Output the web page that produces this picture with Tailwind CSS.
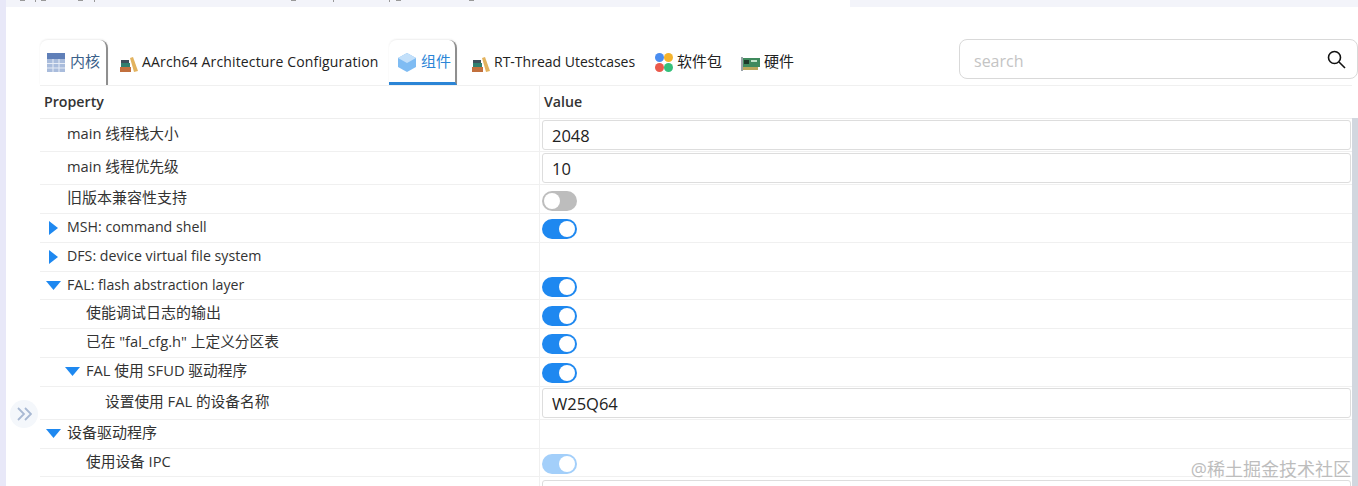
<!DOCTYPE html>
<html lang="en">
<head>
  <meta charset="UTF-8" />
  <title>RT-Thread Settings</title>
  <script src="https://cdn.jsdelivr.net/npm/@tailwindcss/browser@4"></script>
</head>
<body class="bg-white">
  <div class="relative flex h-[486px] w-[1358px] overflow-hidden bg-white font-['Open_Sans','Noto_Sans_CJK_SC',sans-serif] text-[14.2px] text-[#333]">
    <!-- left edge -->
    <div class="h-full w-[6px] shrink-0 bg-[#e8e8f8]"></div>

    <div class="flex min-w-0 flex-1 flex-col">
      <!-- clipped editor tabs -->
      <div class="flex h-[7px] shrink-0 bg-[#f3f4fa]">
        <div class="flex h-[2px] w-[654px] items-start pl-[14px]">
          <span class="h-px w-[5px] bg-[#999]"></span>
          <span class="ml-[10px] h-[2px] w-px bg-[#999]"></span>
          <span class="ml-[5px] h-px w-[5px] bg-[#999]"></span>
          <span class="ml-[32px] h-px w-[5px] bg-[#999]"></span>
          <span class="ml-[11px] h-[2px] w-px bg-[#999]"></span>
          <span class="ml-[196px] h-px w-[5px] bg-[#999]"></span>
          <span class="ml-[37px] h-[2px] w-px bg-[#999]"></span>
          <span class="ml-[55px] h-[2px] w-px bg-[#999]"></span>
          <span class="ml-[6px] h-px w-[5px] bg-[#999]"></span>
          <span class="ml-[68px] h-px w-[5px] bg-[#999]"></span>
        </div>
        <div class="h-full w-[190px] bg-white"></div>
        <div class="flex-1"></div>
      </div>

      <!-- tab bar -->
      <div class="flex h-[78px] shrink-0 items-end pl-[34px]">
        <div class="flex h-[45px] items-center">
          <div class="flex h-full w-[68px] items-center gap-[5px] rounded-t-[8px] border-r-2 border-[#8f8f8f] pl-[7px] shadow-[0_-1px_2px_#eeeeee]">
            <svg width="18" height="19" viewBox="0 0 18 19">
              <rect width="18" height="19" fill="#a9bcdc" />
              <rect width="18" height="6" fill="#5f7fb8" />
              <path d="M6 6v13M12 6v13M0 10.5h18M0 15h18" stroke="#e6ecf6" stroke-width="1" />
            </svg>
            <span class="-mt-[2px] text-[15px] whitespace-nowrap text-[#3a5f8a]">内核</span>
          </div>
          <div class="flex h-full w-[281px] items-center pl-[12px]">
            <svg width="18" height="15" viewBox="0 0 18 15" class="mt-[4px] shrink-0">
              <rect x="0" y="10" width="11" height="5" fill="#c2703d" />
              <rect x="1" y="6" width="9" height="4" fill="#2f7f6f" />
              <rect x="1" y="3" width="8" height="3" fill="#3c4f5c" />
              <path d="M10 1 L13 0 L18 14 L14 15 Z" fill="#e3b35f" />
            </svg>
            <span class="-mt-[2px] ml-[4px] whitespace-nowrap text-[14px] tracking-[0.15px] text-[#222]">AArch64 Architecture Configuration</span>
          </div>
          <div class="flex h-full w-[68px] items-center gap-[4px] rounded-t-[8px] border-r-2 border-b-[3px] border-r-[#8f8f8f] border-b-[#2b85d6] pl-[8px] pt-[2px] shadow-[0_-1px_2px_#eeeeee]">
            <svg width="20" height="20" viewBox="0 0 20 20">
              <path d="M10 1 L19 6 V15 L10 20 L1 15 V6 Z" fill="#7fbcf3" />
              <path d="M10 1 L19 6 L10 11 L1 6 Z" fill="#c3e0fa" />
            </svg>
            <span class="-mt-[2px] text-[15px] whitespace-nowrap text-[#2b85d6]">组件</span>
          </div>
          <div class="flex h-full w-[198px] items-center pl-[15px]">
            <svg width="18" height="15" viewBox="0 0 18 15" class="mt-[4px] shrink-0">
              <rect x="0" y="10" width="11" height="5" fill="#c2703d" />
              <rect x="1" y="6" width="9" height="4" fill="#2f7f6f" />
              <rect x="1" y="3" width="8" height="3" fill="#3c4f5c" />
              <path d="M10 1 L13 0 L18 14 L14 15 Z" fill="#e3b35f" />
            </svg>
            <span class="-mt-[2px] ml-[4px] whitespace-nowrap text-[14px] text-[#222]">RT-Thread Utestcases</span>
          </div>
          <div class="flex h-full w-[86px] items-center gap-[4px]">
            <svg width="18" height="19" viewBox="0 0 18 19">
              <circle cx="4.5" cy="4.5" r="4.5" fill="#4a8df0" />
              <circle cx="13.5" cy="4.5" r="4.5" fill="#f5b32c" />
              <circle cx="4.5" cy="14.5" r="4.5" fill="#ea5a4c" />
              <circle cx="13.5" cy="14.5" r="4.5" fill="#35c07c" />
            </svg>
            <span class="-mt-[2px] text-[15px] whitespace-nowrap text-[#222]">软件包</span>
          </div>
          <div class="flex h-full items-center gap-[4px]">
            <svg width="19" height="14" viewBox="0 0 19 14" class="mt-[3px]">
              <rect y="1" width="19" height="9" fill="#3f8a5d" />
              <rect x="3" y="3" width="5" height="4" fill="#1e3a2a" />
              <rect x="10" y="3" width="6" height="2" fill="#bfe3c8" />
              <rect x="2" y="10" width="15" height="3" fill="#b9a75b" />
              <rect y="0" width="2" height="14" fill="#9aa3a8" />
            </svg>
            <span class="-mt-[2px] text-[15px] whitespace-nowrap text-[#222]">硬件</span>
          </div>
        </div>
        <!-- search -->
        <div class="mb-[6px] ml-auto flex h-[40px] w-[399px] items-center rounded-[8px] border border-[#d9d9d9] pl-[14px] pr-[11px]">
          <span class="flex-1 pt-[3px] text-[16px] text-[#c4c4c4]">search</span>
          <svg width="19" height="19" viewBox="0 0 19 19" fill="none" stroke="#111" stroke-width="1.6">
            <circle cx="7.5" cy="7.5" r="6" />
            <path d="M12 12 L18 18" />
          </svg>
        </div>
      </div>

      <!-- property table -->
      <div class="ml-[34px] flex min-h-0 flex-1 overflow-hidden">
        <div class="w-[1312px] shrink-0 border-t border-[#f0f0f0]">
          <div class="grid h-[33px] grid-cols-[500px_1fr] border-b border-[#eeeeee] font-semibold text-[#333]">
            <div class="flex items-center border-r border-[#f0f0f0] pl-[4px]">Property</div>
            <div class="flex items-center pl-[4px]">Value</div>
          </div>

          <div class="grid h-[33px] grid-cols-[500px_1fr] border-b border-[#f0f0f0]">
            <div class="flex items-center border-r border-[#f0f0f0] pb-[4px] pl-[27px] text-[14.7px]">main 线程栈大小</div>
            <div class="flex items-center pl-[2px]">
              <div class="flex h-[30px] w-[809px] items-center rounded-[3px] border border-[#dddddd] pl-[9px] pt-[2px] text-[16.5px] text-[#222]">2048</div>
            </div>
          </div>
          <div class="grid h-[33px] grid-cols-[500px_1fr] border-b border-[#f0f0f0]">
            <div class="flex items-center border-r border-[#f0f0f0] pb-[4px] pl-[27px] text-[14.7px]">main 线程优先级</div>
            <div class="flex items-center pl-[2px]">
              <div class="flex h-[30px] w-[809px] items-center rounded-[3px] border border-[#dddddd] pl-[9px] pt-[2px] text-[16.5px] text-[#222]">10</div>
            </div>
          </div>
          <div class="grid h-[29px] grid-cols-[500px_1fr] border-b border-[#f0f0f0]">
            <div class="flex items-center border-r border-[#f0f0f0] pb-[4px] pl-[27px] text-[15px]">旧版本兼容性支持</div>
            <div class="flex items-center pl-[2px] pt-[4px]">
              <div class="flex h-[20px] w-[35px] items-center justify-start rounded-full bg-[#bdbdbd] px-[2px]"><span class="size-[16px] rounded-full bg-white"></span></div>
            </div>
          </div>
          <div class="grid h-[29px] grid-cols-[500px_1fr] border-b border-[#f0f0f0]">
            <div class="flex items-center border-r border-[#f0f0f0] pb-[2px] pl-[9px]">
              <svg width="9" height="14" viewBox="0 0 9 14" class="mr-[9px] mt-[2px]"><path d="M0 0 L9 7 L0 14 Z" fill="#1e88f0" /></svg>
              MSH: command shell
            </div>
            <div class="flex items-center pl-[2px] pt-[2px]">
              <div class="flex h-[20px] w-[35px] items-center justify-end rounded-full bg-[#1e88f0] px-[2px]"><span class="size-[16px] rounded-full bg-white"></span></div>
            </div>
          </div>
          <div class="grid h-[29px] grid-cols-[500px_1fr] border-b border-[#f0f0f0]">
            <div class="flex items-center border-r border-[#f0f0f0] pb-[2px] pl-[9px]">
              <svg width="9" height="14" viewBox="0 0 9 14" class="mr-[9px] mt-[2px]"><path d="M0 0 L9 7 L0 14 Z" fill="#1e88f0" /></svg>
              DFS: device virtual file system
            </div>
            <div></div>
          </div>
          <div class="grid h-[28px] grid-cols-[500px_1fr] border-b border-[#f0f0f0]">
            <div class="flex items-center border-r border-[#f0f0f0] pb-[1px] pl-[6px]">
              <svg width="15" height="9" viewBox="0 0 15 9" class="mr-[6px]"><path d="M0 0 H15 L7.5 9 Z" fill="#1e88f0" /></svg>
              FAL: flash abstraction layer
            </div>
            <div class="flex items-center pl-[2px] pt-[3px]">
              <div class="flex h-[20px] w-[35px] items-center justify-end rounded-full bg-[#1e88f0] px-[2px]"><span class="size-[16px] rounded-full bg-white"></span></div>
            </div>
          </div>
          <div class="grid h-[29px] grid-cols-[500px_1fr] border-b border-[#f0f0f0]">
            <div class="flex items-center border-r border-[#f0f0f0] pb-[4px] pl-[46px] text-[15px]">使能调试日志的输出</div>
            <div class="flex items-center pl-[2px] pt-[4px]">
              <div class="flex h-[20px] w-[35px] items-center justify-end rounded-full bg-[#1e88f0] px-[2px]"><span class="size-[16px] rounded-full bg-white"></span></div>
            </div>
          </div>
          <div class="grid h-[29px] grid-cols-[500px_1fr] border-b border-[#f0f0f0]">
            <div class="flex items-center border-r border-[#f0f0f0] pb-[4px] pl-[46px] text-[14.7px]">已在 "fal_cfg.h" 上定义分区表</div>
            <div class="flex items-center pl-[2px] pt-[2px]">
              <div class="flex h-[20px] w-[35px] items-center justify-end rounded-full bg-[#1e88f0] px-[2px]"><span class="size-[16px] rounded-full bg-white"></span></div>
            </div>
          </div>
          <div class="grid h-[29px] grid-cols-[500px_1fr] border-b border-[#f0f0f0]">
            <div class="flex items-center border-r border-[#f0f0f0] pb-[4px] pl-[25px] text-[14.7px]">
              <svg width="15" height="9" viewBox="0 0 15 9" class="mr-[6px] mt-[2px]"><path d="M0 0 H15 L7.5 9 Z" fill="#1e88f0" /></svg>
              FAL 使用 SFUD 驱动程序
            </div>
            <div class="flex items-center pl-[2px] pt-[2px]">
              <div class="flex h-[20px] w-[35px] items-center justify-end rounded-full bg-[#1e88f0] px-[2px]"><span class="size-[16px] rounded-full bg-white"></span></div>
            </div>
          </div>
          <div class="grid h-[33px] grid-cols-[500px_1fr] border-b border-[#f0f0f0]">
            <div class="flex items-center border-r border-[#f0f0f0] pb-[4px] pl-[65px] text-[14.7px]">设置使用 FAL 的设备名称</div>
            <div class="flex items-center pl-[2px]">
              <div class="flex h-[30px] w-[809px] items-center rounded-[3px] border border-[#dddddd] pl-[9px] pt-[2px] text-[16.5px] text-[#222]">W25Q64</div>
            </div>
          </div>
          <div class="grid h-[29px] grid-cols-[500px_1fr] border-b border-[#f0f0f0]">
            <div class="flex items-center border-r border-[#f0f0f0] pb-[3px] pl-[6px] text-[15px]">
              <svg width="15" height="9" viewBox="0 0 15 9" class="mr-[6px] mt-[2px]"><path d="M0 0 H15 L7.5 9 Z" fill="#1e88f0" /></svg>
              设备驱动程序
            </div>
            <div></div>
          </div>
          <div class="grid h-[28px] grid-cols-[500px_1fr] border-b border-[#f0f0f0]">
            <div class="flex items-center border-r border-[#f0f0f0] pb-[3px] pl-[46px] text-[14.7px]">使用设备 IPC</div>
            <div class="flex items-center pl-[2px] pt-[3px]">
              <div class="flex h-[20px] w-[35px] items-center justify-end rounded-full bg-[#a3cffa] px-[2px]"><span class="size-[16px] rounded-full bg-white"></span></div>
            </div>
          </div>
          <div class="grid h-[33px] grid-cols-[500px_1fr]">
            <div class="border-r border-[#f0f0f0]"></div>
            <div class="pl-[2px] pt-[3px]">
              <div class="h-[30px] w-[809px] rounded-[3px] border border-[#dddddd]"></div>
            </div>
          </div>
        </div>
        <!-- scrollbar -->
        <div class="mt-[33px] w-[6px] shrink-0 bg-[#d2d7df]"></div>
      </div>
    </div>

    <!-- collapsed sidebar handle -->
    <div class="absolute left-[10px] top-[400px] flex size-[28px] items-center justify-center rounded-full bg-[#f4f7fb]">
      <svg width="15" height="14" viewBox="0 0 15 14" fill="none" stroke="#a9b9d3" stroke-width="1.8">
        <path d="M1 1 L7 7 L1 13" />
        <path d="M8 1 L14 7 L8 13" />
      </svg>
    </div>
    <!-- watermark -->
    <div class="absolute right-[7px] top-[457px] text-[18px] leading-[24px] text-[#bdbdbd]">@稀土掘金技术社区</div>
  </div>
</body>
</html>
